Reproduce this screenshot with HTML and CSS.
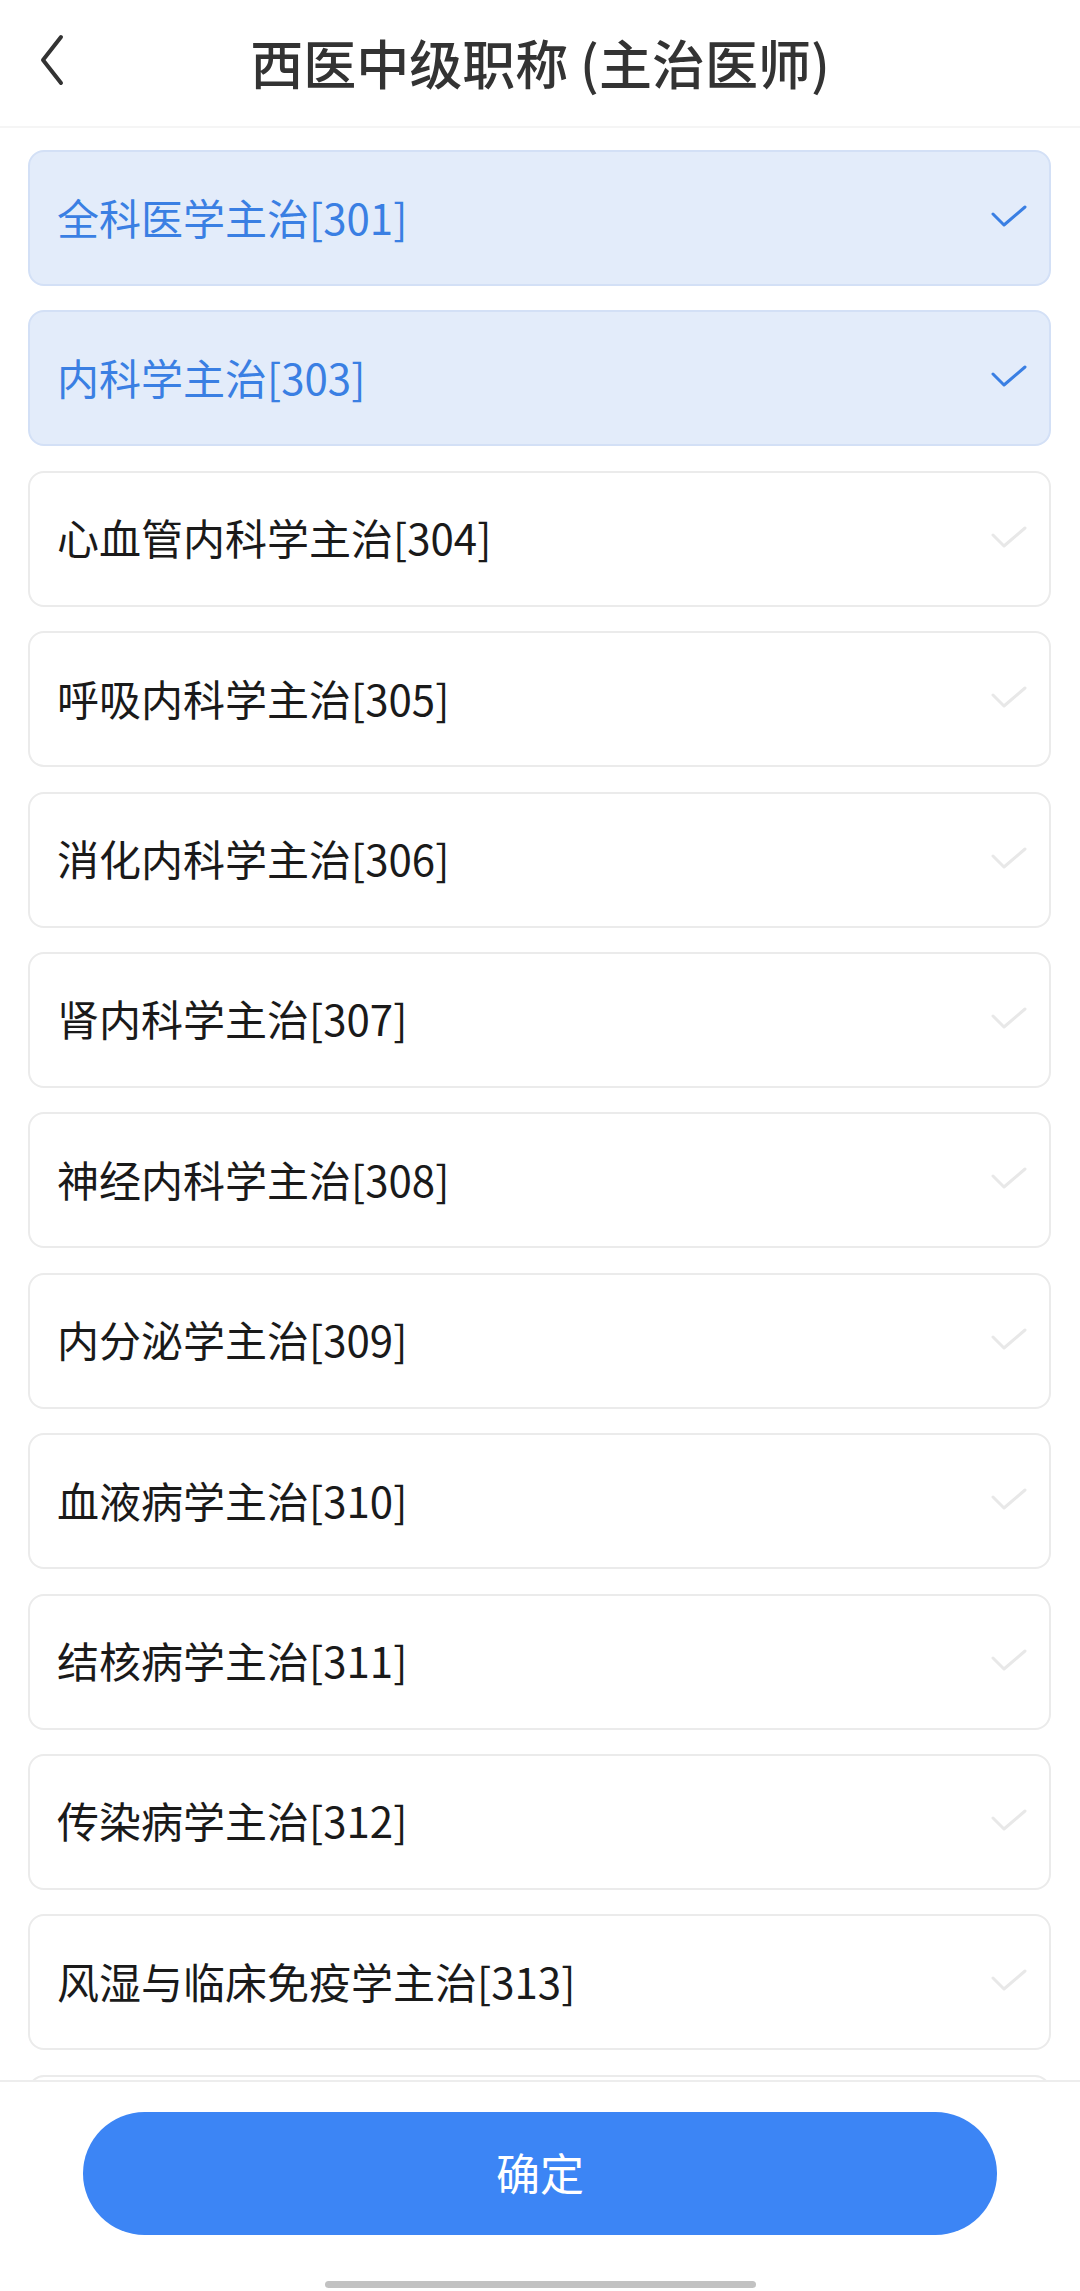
FILE: index.html
```html
<!DOCTYPE html>
<html lang="zh-CN">
<head>
    <meta charset="UTF-8">
    <meta name="viewport" content="width=device-width, initial-scale=1.0">
    <title>西医中级职称 (主治医师)</title>
    <link rel="stylesheet" href="styles.css">
</head>
<body>
    <div class="page">
        <div class="header">
            <a class="back" href="#">
                <svg width="28" height="52" viewBox="0 0 28 52">
                    <polyline points="22,3 4,26 22,49" fill="none" stroke="#333" stroke-width="4" stroke-linecap="round" stroke-linejoin="round"/>
                </svg>
            </a>
            <h1>西医中级职称 (主治医师)</h1>
        </div>
        <div class="list">
            <div class="item active"><span>全科医学主治[301]</span><svg class="check" viewBox="0 0 36 24"><polyline points="2,10 13,21 34,3"/></svg></div>
            <div class="item active"><span>内科学主治[303]</span><svg class="check" viewBox="0 0 36 24"><polyline points="2,10 13,21 34,3"/></svg></div>
            <div class="item"><span>心血管内科学主治[304]</span><svg class="check" viewBox="0 0 36 24"><polyline points="2,10 13,21 34,3"/></svg></div>
            <div class="item"><span>呼吸内科学主治[305]</span><svg class="check" viewBox="0 0 36 24"><polyline points="2,10 13,21 34,3"/></svg></div>
            <div class="item"><span>消化内科学主治[306]</span><svg class="check" viewBox="0 0 36 24"><polyline points="2,10 13,21 34,3"/></svg></div>
            <div class="item"><span>肾内科学主治[307]</span><svg class="check" viewBox="0 0 36 24"><polyline points="2,10 13,21 34,3"/></svg></div>
            <div class="item"><span>神经内科学主治[308]</span><svg class="check" viewBox="0 0 36 24"><polyline points="2,10 13,21 34,3"/></svg></div>
            <div class="item"><span>内分泌学主治[309]</span><svg class="check" viewBox="0 0 36 24"><polyline points="2,10 13,21 34,3"/></svg></div>
            <div class="item"><span>血液病学主治[310]</span><svg class="check" viewBox="0 0 36 24"><polyline points="2,10 13,21 34,3"/></svg></div>
            <div class="item"><span>结核病学主治[311]</span><svg class="check" viewBox="0 0 36 24"><polyline points="2,10 13,21 34,3"/></svg></div>
            <div class="item"><span>传染病学主治[312]</span><svg class="check" viewBox="0 0 36 24"><polyline points="2,10 13,21 34,3"/></svg></div>
            <div class="item"><span>风湿与临床免疫学主治[313]</span><svg class="check" viewBox="0 0 36 24"><polyline points="2,10 13,21 34,3"/></svg></div>
            <div class="item"></div>
        </div>
        <div class="footer">
            <button class="confirm">确定</button>
            <div class="home-bar"></div>
        </div>
    </div>

    <script>
        // 点击切换选中状态
        const items = document.querySelectorAll('.item');
        items.forEach(function(item) {
            item.addEventListener('click', function() {
                item.classList.toggle('active');
            });
        });
    </script>
</body>
</html>
```
FILE: styles.css
```css
body {
    margin: 0;
    padding: 0;
    background-color: #fff;
    font-family: 'Noto Sans CJK SC', 'Noto Sans', sans-serif;
}
.page {
    height: 100vh;
    display: flex;
    flex-direction: column;
    overflow: hidden;
}
.header {
    height: 126px;
    flex-shrink: 0;
    display: flex;
    align-items: center;
    justify-content: center;
    position: relative;
    border-bottom: 2px solid #f5f5f5;
}
.header h1 {
    margin: 0;
    font-size: 53px;
    font-weight: 500;
    color: #333;
    padding-bottom: 2px;
}
.back {
    position: absolute;
    left: 39px;
    top: 34px;
    display: block;
    height: 52px;
}
.list {
    flex: 1;
    overflow: hidden;
    padding: 22px 29px 0 28px;
}
.item {
    height: 136px;
    box-sizing: border-box;
    border: 2px solid #ebebeb;
    border-radius: 16px;
    background-color: #fff;
    margin-bottom: 24.4px;
    padding: 0 22px 0 27px;
    display: flex;
    align-items: center;
    justify-content: space-between;
    font-size: 42px;
    color: #1a1a1a;
    cursor: pointer;
}
.item span {
    padding-bottom: 4px;
}
.item.active {
    background-color: #e3ecfa;
    border-color: #d3e0f6;
    color: #3a7fe3;
}
.check {
    width: 36px;
    height: 24px;
    margin-top: -4px;
}
.check polyline {
    fill: none;
    stroke: #e8e8e8;
    stroke-width: 3;
    stroke-linecap: round;
    stroke-linejoin: round;
}
.item.active .check polyline {
    stroke: #3a7fe3;
}
.footer {
    height: 209px;
    flex-shrink: 0;
    border-top: 2px solid #ededed;
    background-color: #fff;
    display: flex;
    flex-direction: column;
    align-items: center;
}
.confirm {
    margin-top: 30px;
    width: 914px;
    height: 123px;
    border: none;
    border-radius: 62px;
    background-color: #3c85f5;
    color: #fff;
    font-family: inherit;
    font-size: 44px;
    padding-bottom: 4px;
    cursor: pointer;
}
.home-bar {
    margin-top: 46px;
    width: 431px;
    height: 7px;
    border-radius: 4px;
    background-color: #c2c2c2;
}
```
